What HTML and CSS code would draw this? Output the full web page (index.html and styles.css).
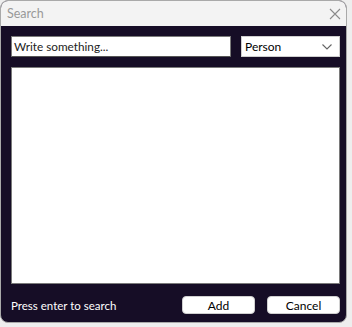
FILE: index.html
```html
<!DOCTYPE html>
<html>
<head>
<meta charset="utf-8">
<link rel="stylesheet" href="styles.css">
</head>
<body>
<div class="window">
  <div class="titlebar">
    <span class="title">Search</span>
    <svg class="close" width="12" height="12" viewBox="0 0 12 12"><path d="M1 1L11 11M11 1L1 11" stroke="#8a8a8a" stroke-width="1.1" fill="none"/></svg>
  </div>
  <div class="body">
    <div class="toprow">
      <div class="input">Write something...</div>
      <div class="select"><span>Person</span>
        <svg width="10" height="6" viewBox="0 0 10 6"><path d="M0.5 0.5L5 5L9.5 0.5" stroke="#666" stroke-width="1.1" fill="none"/></svg>
      </div>
    </div>
    <div class="results"></div>
    <div class="footer">
      <span class="hint">Press enter to search</span>
      <div class="buttons">
        <div class="btn">Add</div>
        <div class="btn">Cancel</div>
      </div>
    </div>
  </div>
</div>
</body>
</html>
```
FILE: styles.css
```css
* { box-sizing: border-box; }
html, body { margin: 0; padding: 0; }
body {
  width: 352px; height: 327px; background: #eeeeee; overflow: hidden;
  font-family: Lato, "Noto Sans", sans-serif;
  font-size: 12px;
}
.window {
  width: 347px; height: 323px;
  border: 1px solid #a9a9a9;
  border-radius: 8px;
  overflow: hidden;
  display: flex; flex-direction: column;
  background: #160d26;
}
.titlebar {
  height: 25px; flex: none;
  background: #f3f3f3;
  display: flex; align-items: center; justify-content: space-between;
  padding: 0 5px 0 6px;
}
.title { color: #999; font-size: 12.5px; }
.close { margin-top: 1px; }
.body {
  flex: 1; display: flex; flex-direction: column;
  padding: 10px 6px 0 10px;
}
.toprow { display: flex; gap: 10px; height: 21px; flex: none; }
.input {
  width: 220px; background: #fff; border: 1px solid #7a7a7a; border-bottom-color: #555;
  padding: 0 2px; line-height: 19px; color: #222; font-size: 11.75px;
}
.select {
  width: 99px; background: #fff; border: 1px solid #cfcfcf;
  display: flex; align-items: center; justify-content: space-between;
  padding: 0 7px 0 3px; color: #000; font-size: 12px;
}
.results {
  margin-top: 10px; width: 329px; height: 217px; background: #fff;
  border: 1px solid #7a7a7a; flex: none;
}
.footer {
  display: flex; align-items: center; justify-content: space-between;
  margin-top: 12px; height: 18px; flex: none;
  width: 329px;
}
.hint { color: #fff; font-size: 11.5px; }
.buttons { display: flex; gap: 12px; }
.btn {
  width: 73px; height: 18px; background: #fff; border-radius: 4px;
  border: 1px solid #d0d0d0;
  display: flex; align-items: center; justify-content: center; color: #000; font-size: 12px;
}
```
